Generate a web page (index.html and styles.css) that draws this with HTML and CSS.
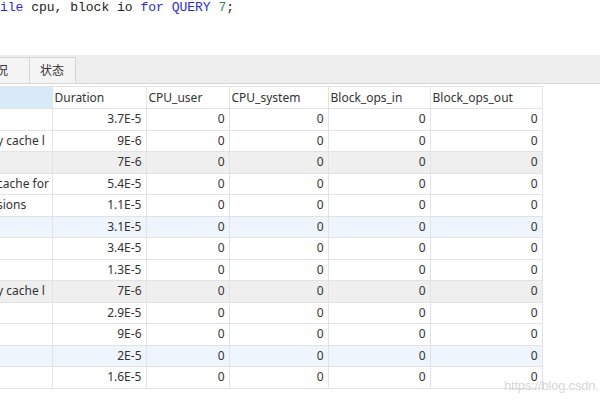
FILE: index.html
```html
<!DOCTYPE html>
<html>
<head>
<meta charset="utf-8">
<link rel="stylesheet" href="styles.css">
</head>
<body>
<div class="editor">
  <div class="code"><span class="kw">ile</span> cpu, block io <span class="kw">for</span> <span class="kw">QUERY</span> <span class="num">7</span>;</div>
</div>
<div class="tabbar">
  <div class="tab">况</div>
  <div class="tab">状态</div>
</div>
<div class="grid-wrap">
<table class="grid">
  <colgroup>
    <col class="c0"><col class="c1"><col class="c2"><col class="c3"><col class="c4"><col class="c5">
  </colgroup>
  <thead>
    <tr><th class="sel"></th><th>Duration</th><th>CPU_user</th><th>CPU_system</th><th>Block_ops_in</th><th>Block_ops_out</th></tr>
  </thead>
  <tbody>
    <tr><td class="txt"></td><td>3.7E-5</td><td>0</td><td>0</td><td>0</td><td>0</td></tr>
    <tr><td class="txt"><span class="clip">y cache l</span></td><td>9E-6</td><td>0</td><td>0</td><td>0</td><td>0</td></tr>
    <tr class="gray"><td class="txt"></td><td>7E-6</td><td>0</td><td>0</td><td>0</td><td>0</td></tr>
    <tr><td class="txt"><span class="clip">cache for</span></td><td>5.4E-5</td><td>0</td><td>0</td><td>0</td><td>0</td></tr>
    <tr><td class="txt"><span class="clip">sions</span></td><td>1.1E-5</td><td>0</td><td>0</td><td>0</td><td>0</td></tr>
    <tr class="blue"><td class="txt"></td><td>3.1E-5</td><td>0</td><td>0</td><td>0</td><td>0</td></tr>
    <tr><td class="txt"></td><td>3.4E-5</td><td>0</td><td>0</td><td>0</td><td>0</td></tr>
    <tr><td class="txt"></td><td>1.3E-5</td><td>0</td><td>0</td><td>0</td><td>0</td></tr>
    <tr class="gray"><td class="txt"><span class="clip">y cache l</span></td><td>7E-6</td><td>0</td><td>0</td><td>0</td><td>0</td></tr>
    <tr><td class="txt"></td><td>2.9E-5</td><td>0</td><td>0</td><td>0</td><td>0</td></tr>
    <tr><td class="txt"></td><td>9E-6</td><td>0</td><td>0</td><td>0</td><td>0</td></tr>
    <tr class="blue"><td class="txt"></td><td>2E-5</td><td>0</td><td>0</td><td>0</td><td>0</td></tr>
    <tr><td class="txt"></td><td>1.6E-5</td><td>0</td><td>0</td><td>0</td><td>0</td></tr>
  </tbody>
</table>
<div class="watermark">https://blog.csdn.</div>
</div>
</body>
</html>
```
FILE: styles.css
```css
html, body {
  margin: 0;
  padding: 0;
  background: #ffffff;
  width: 600px;
  height: 400px;
  overflow: hidden;
}
.editor {
  height: 55px;
  background: #ffffff;
}
.code {
  font-family: "Liberation Mono", monospace;
  font-size: 13px;
  line-height: 16px;
  color: #222222;
  white-space: pre;
  padding-top: 0;
}
.kw { color: #2b2bd8; }
.num { color: #2e8b57; }
.tabbar {
  height: 29px;
  background: #eeeeee;
  border-bottom: 1px solid #d6d6d6;
  display: flex;
  align-items: flex-end;
  box-sizing: border-box;
  padding-top: 3px;
}
.tab {
  height: 26px;
  box-sizing: border-box;
  border: 1px solid #d4d4d4;
  border-bottom: none;
  background: #f4f4f4;
  font-family: "Noto Sans CJK SC", sans-serif;
  font-size: 12px;
  line-height: 24px;
  color: #333;
  padding: 0 10px;
}
.tab:first-child {
  border-left: none;
  padding: 0 4px 0 0;
  width: 30px;
  text-indent: -4px;
}
.tab + .tab {
  margin-left: -1px;
  width: 47px;
}
.grid-wrap {
  position: relative;
  padding-top: 2px;
}
.grid {
  border-collapse: collapse;
  table-layout: fixed;
  width: 542px;
  font-family: "Noto Sans", "Open Sans", sans-serif;
  font-size: 12px;
  color: #333333;
}
.c0 { width: 52px; }
.c1 { width: 94px; }
.c2 { width: 83px; }
.c3 { width: 99px; }
.c4 { width: 102px; }
.c5 { width: 112px; }
.grid th, .grid td {
  height: 21px;
  box-sizing: border-box;
  padding: 0 4px;
  border: 1px solid #e3e3e3;
  white-space: nowrap;
  overflow: hidden;
  line-height: 20px;
}
.grid th {
  font-weight: normal;
  text-align: left;
  height: 22px;
  padding-left: 2px;
  background: #ffffff;
}
.grid th.sel {
  background: #d8e9f8;
  border-left: none;
}
.grid td {
  text-align: right;
  height: 21.5px;
}
.grid td.txt {
  text-align: left;
  padding: 0;
  border-left: none;
}
.clip {
  display: block;
  margin-left: -3px;
}
.grid tr.gray td { background: #efefef; }
.grid tr.blue td { background: #eef5fd; }
.watermark {
  position: absolute;
  left: 504px;
  top: 294px;
  font-family: "Liberation Sans", sans-serif;
  font-size: 13px;
  letter-spacing: -0.2px;
  color: rgba(185, 185, 185, 0.6);
  white-space: nowrap;
}
```
